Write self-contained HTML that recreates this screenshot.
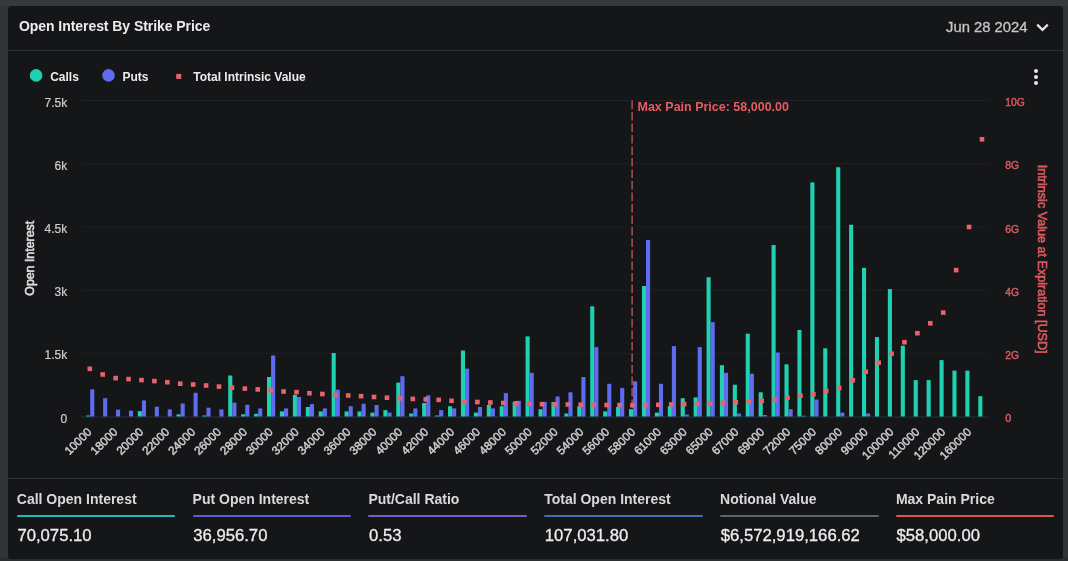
<!DOCTYPE html>
<html><head><meta charset="utf-8"><title>Open Interest By Strike Price</title>
<style>
html,body{margin:0;padding:0}
body{width:1068px;height:561px;overflow:hidden;background:#323335;font-family:"Liberation Sans",sans-serif;position:relative}
.top{position:absolute;left:0;top:0;width:1068px;height:6px;background:#38393b}
.bot{position:absolute;left:0;top:557px;width:1068px;height:4px;background:#2c2d2f}
.card{position:absolute;left:8.2px;top:5.6px;width:1054.7px;height:553px;background:#151618;border-radius:3.5px}
.hd{position:absolute;left:8px;top:49.5px;width:1054.5px;height:1px;background:#2f3034}
.fd{position:absolute;left:8px;top:478.1px;width:1054.5px;height:1px;background:#2f3034}
.title{position:absolute;left:19px;top:16.6px;font-size:14px;letter-spacing:-0.06px;font-weight:bold;color:#ececee;white-space:nowrap;line-height:18px}
.date{position:absolute;left:946px;top:18.2px;font-size:14.8px;-webkit-text-stroke:0.3px #c6c6c8;color:#c6c6c8;white-space:nowrap;line-height:18px}
svg{position:absolute;left:0;top:0}
#w{position:absolute;left:0;top:0;width:1068px;height:561px;filter:blur(0.35px)}
svg text{font-family:"Liberation Sans",sans-serif}
.fl{position:absolute;top:489.7px;font-size:14px;font-weight:bold;color:#d9d9db;white-space:nowrap;line-height:18px}
.fu{position:absolute;top:514.7px;width:158.6px;height:2.6px;border-radius:1px}
.fv{position:absolute;top:525.3px;font-size:16.7px;-webkit-text-stroke:0.3px #ececee;color:#ececee;white-space:nowrap;line-height:22px}
</style></head><body>
<div class="top"></div><div class="bot"></div>
<div class="card"></div>
<div id="w">
<div class="hd"></div>
<div class="fd"></div>
<div class="title" id="title">Open Interest By Strike Price</div>
<div class="date" id="date">Jun 28 2024</div>
<svg width="1068" height="561" viewBox="0 0 1068 561">
<line x1="81" x2="988.5" y1="100.5" y2="100.5" stroke="#1f2024" stroke-width="1"/>
<line x1="81" x2="988.5" y1="163.7" y2="163.7" stroke="#1f2024" stroke-width="1"/>
<line x1="81" x2="988.5" y1="226.9" y2="226.9" stroke="#1f2024" stroke-width="1"/>
<line x1="81" x2="988.5" y1="290.1" y2="290.1" stroke="#1f2024" stroke-width="1"/>
<line x1="81" x2="988.5" y1="353.3" y2="353.3" stroke="#1f2024" stroke-width="1"/>
<line x1="81" x2="988.5" y1="417.0" y2="417.0" stroke="#2e2f34" stroke-width="1"/>
<line x1="632.1" x2="632.1" y1="100.5" y2="416.5" stroke="#c5575a" stroke-width="1.3" stroke-dasharray="8.4,3.1"/>
<rect x="86.10" y="415.5" width="4.1" height="1.0" fill="#1fd0b1"/>
<rect x="90.20" y="389.4" width="4.1" height="27.1" fill="#5f6cf2"/>
<rect x="103.12" y="398.2" width="4.1" height="18.3" fill="#5f6cf2"/>
<rect x="116.04" y="409.7" width="4.1" height="6.8" fill="#5f6cf2"/>
<rect x="128.96" y="410.7" width="4.1" height="5.8" fill="#5f6cf2"/>
<rect x="137.78" y="411.1" width="4.1" height="5.4" fill="#1fd0b1"/>
<rect x="141.88" y="400.4" width="4.1" height="16.1" fill="#5f6cf2"/>
<rect x="154.80" y="406.7" width="4.1" height="9.8" fill="#5f6cf2"/>
<rect x="167.72" y="409.4" width="4.1" height="7.1" fill="#5f6cf2"/>
<rect x="176.54" y="414.3" width="4.1" height="2.2" fill="#1fd0b1"/>
<rect x="180.64" y="403.5" width="4.1" height="13.0" fill="#5f6cf2"/>
<rect x="193.56" y="392.8" width="4.1" height="23.7" fill="#5f6cf2"/>
<rect x="202.38" y="415.5" width="4.1" height="1.0" fill="#1fd0b1"/>
<rect x="206.48" y="407.7" width="4.1" height="8.8" fill="#5f6cf2"/>
<rect x="219.40" y="409.4" width="4.1" height="7.1" fill="#5f6cf2"/>
<rect x="228.22" y="375.5" width="4.1" height="41.0" fill="#1fd0b1"/>
<rect x="232.32" y="402.6" width="4.1" height="13.9" fill="#5f6cf2"/>
<rect x="241.14" y="414.3" width="4.1" height="2.2" fill="#1fd0b1"/>
<rect x="245.24" y="404.8" width="4.1" height="11.7" fill="#5f6cf2"/>
<rect x="254.07" y="413.8" width="4.1" height="2.7" fill="#1fd0b1"/>
<rect x="258.17" y="408.4" width="4.1" height="8.1" fill="#5f6cf2"/>
<rect x="267.00" y="377.0" width="4.1" height="39.5" fill="#1fd0b1"/>
<rect x="271.10" y="355.5" width="4.1" height="61.0" fill="#5f6cf2"/>
<rect x="279.92" y="411.4" width="4.1" height="5.1" fill="#1fd0b1"/>
<rect x="284.02" y="408.4" width="4.1" height="8.1" fill="#5f6cf2"/>
<rect x="292.85" y="394.8" width="4.1" height="21.7" fill="#1fd0b1"/>
<rect x="296.95" y="396.9" width="4.1" height="19.6" fill="#5f6cf2"/>
<rect x="305.78" y="407.0" width="4.1" height="9.5" fill="#1fd0b1"/>
<rect x="309.88" y="404.1" width="4.1" height="12.4" fill="#5f6cf2"/>
<rect x="318.71" y="411.4" width="4.1" height="5.1" fill="#1fd0b1"/>
<rect x="322.81" y="408.4" width="4.1" height="8.1" fill="#5f6cf2"/>
<rect x="331.64" y="353.0" width="4.1" height="63.5" fill="#1fd0b1"/>
<rect x="335.74" y="389.7" width="4.1" height="26.8" fill="#5f6cf2"/>
<rect x="344.56" y="411.4" width="4.1" height="5.1" fill="#1fd0b1"/>
<rect x="348.66" y="406.2" width="4.1" height="10.3" fill="#5f6cf2"/>
<rect x="357.49" y="411.4" width="4.1" height="5.1" fill="#1fd0b1"/>
<rect x="361.59" y="403.8" width="4.1" height="12.7" fill="#5f6cf2"/>
<rect x="370.42" y="412.6" width="4.1" height="3.9" fill="#1fd0b1"/>
<rect x="374.52" y="405.0" width="4.1" height="11.5" fill="#5f6cf2"/>
<rect x="383.35" y="410.1" width="4.1" height="6.4" fill="#1fd0b1"/>
<rect x="387.45" y="412.6" width="4.1" height="3.9" fill="#5f6cf2"/>
<rect x="396.28" y="382.6" width="4.1" height="33.9" fill="#1fd0b1"/>
<rect x="400.38" y="376.2" width="4.1" height="40.3" fill="#5f6cf2"/>
<rect x="409.21" y="413.5" width="4.1" height="3.0" fill="#1fd0b1"/>
<rect x="413.31" y="408.4" width="4.1" height="8.1" fill="#5f6cf2"/>
<rect x="422.13" y="403.0" width="4.1" height="13.5" fill="#1fd0b1"/>
<rect x="426.23" y="395.3" width="4.1" height="21.2" fill="#5f6cf2"/>
<rect x="435.06" y="415.5" width="4.1" height="1.0" fill="#1fd0b1"/>
<rect x="439.16" y="410.1" width="4.1" height="6.4" fill="#5f6cf2"/>
<rect x="447.99" y="406.2" width="4.1" height="10.3" fill="#1fd0b1"/>
<rect x="452.09" y="408.4" width="4.1" height="8.1" fill="#5f6cf2"/>
<rect x="460.92" y="350.5" width="4.1" height="66.0" fill="#1fd0b1"/>
<rect x="465.02" y="368.6" width="4.1" height="47.9" fill="#5f6cf2"/>
<rect x="473.85" y="412.6" width="4.1" height="3.9" fill="#1fd0b1"/>
<rect x="477.95" y="407.0" width="4.1" height="9.5" fill="#5f6cf2"/>
<rect x="486.77" y="405.0" width="4.1" height="11.5" fill="#1fd0b1"/>
<rect x="490.87" y="408.4" width="4.1" height="8.1" fill="#5f6cf2"/>
<rect x="499.70" y="406.2" width="4.1" height="10.3" fill="#1fd0b1"/>
<rect x="503.80" y="393.1" width="4.1" height="23.4" fill="#5f6cf2"/>
<rect x="512.63" y="401.9" width="4.1" height="14.6" fill="#1fd0b1"/>
<rect x="516.73" y="400.8" width="4.1" height="15.7" fill="#5f6cf2"/>
<rect x="525.56" y="336.4" width="4.1" height="80.1" fill="#1fd0b1"/>
<rect x="529.66" y="372.8" width="4.1" height="43.7" fill="#5f6cf2"/>
<rect x="538.49" y="409.2" width="4.1" height="7.3" fill="#1fd0b1"/>
<rect x="542.59" y="401.9" width="4.1" height="14.6" fill="#5f6cf2"/>
<rect x="551.41" y="401.9" width="4.1" height="14.6" fill="#1fd0b1"/>
<rect x="555.51" y="396.5" width="4.1" height="20.0" fill="#5f6cf2"/>
<rect x="564.34" y="413.5" width="4.1" height="3.0" fill="#1fd0b1"/>
<rect x="568.44" y="392.3" width="4.1" height="24.2" fill="#5f6cf2"/>
<rect x="577.27" y="406.2" width="4.1" height="10.3" fill="#1fd0b1"/>
<rect x="581.37" y="377.0" width="4.1" height="39.5" fill="#5f6cf2"/>
<rect x="590.20" y="306.3" width="4.1" height="110.2" fill="#1fd0b1"/>
<rect x="594.30" y="347.1" width="4.1" height="69.4" fill="#5f6cf2"/>
<rect x="603.13" y="411.4" width="4.1" height="5.1" fill="#1fd0b1"/>
<rect x="607.23" y="383.8" width="4.1" height="32.7" fill="#5f6cf2"/>
<rect x="616.06" y="407.0" width="4.1" height="9.5" fill="#1fd0b1"/>
<rect x="620.16" y="388.1" width="4.1" height="28.4" fill="#5f6cf2"/>
<rect x="628.98" y="409.2" width="4.1" height="7.3" fill="#1fd0b1"/>
<rect x="633.08" y="381.3" width="4.1" height="35.2" fill="#5f6cf2"/>
<rect x="641.91" y="286.0" width="4.1" height="130.5" fill="#1fd0b1"/>
<rect x="646.01" y="240.0" width="4.1" height="176.5" fill="#5f6cf2"/>
<rect x="654.84" y="412.6" width="4.1" height="3.9" fill="#1fd0b1"/>
<rect x="658.94" y="383.8" width="4.1" height="32.7" fill="#5f6cf2"/>
<rect x="667.77" y="406.2" width="4.1" height="10.3" fill="#1fd0b1"/>
<rect x="671.87" y="346.1" width="4.1" height="70.4" fill="#5f6cf2"/>
<rect x="680.70" y="398.2" width="4.1" height="18.3" fill="#1fd0b1"/>
<rect x="684.80" y="414.5" width="4.1" height="2.0" fill="#5f6cf2"/>
<rect x="693.62" y="397.4" width="4.1" height="19.1" fill="#1fd0b1"/>
<rect x="697.72" y="347.1" width="4.1" height="69.4" fill="#5f6cf2"/>
<rect x="706.55" y="277.2" width="4.1" height="139.3" fill="#1fd0b1"/>
<rect x="710.65" y="322.2" width="4.1" height="94.3" fill="#5f6cf2"/>
<rect x="719.88" y="365.2" width="4.1" height="51.3" fill="#1fd0b1"/>
<rect x="723.98" y="372.8" width="4.1" height="43.7" fill="#5f6cf2"/>
<rect x="732.80" y="384.7" width="4.1" height="31.8" fill="#1fd0b1"/>
<rect x="736.90" y="413.5" width="4.1" height="3.0" fill="#5f6cf2"/>
<rect x="745.72" y="333.7" width="4.1" height="82.8" fill="#1fd0b1"/>
<rect x="749.82" y="373.7" width="4.1" height="42.8" fill="#5f6cf2"/>
<rect x="758.64" y="392.3" width="4.1" height="24.2" fill="#1fd0b1"/>
<rect x="762.74" y="415.0" width="4.1" height="1.5" fill="#5f6cf2"/>
<rect x="771.56" y="245.0" width="4.1" height="171.5" fill="#1fd0b1"/>
<rect x="775.66" y="352.5" width="4.1" height="64.0" fill="#5f6cf2"/>
<rect x="784.48" y="364.3" width="4.1" height="52.2" fill="#1fd0b1"/>
<rect x="788.58" y="409.2" width="4.1" height="7.3" fill="#5f6cf2"/>
<rect x="797.40" y="330.0" width="4.1" height="86.5" fill="#1fd0b1"/>
<rect x="801.50" y="415.7" width="4.1" height="0.8" fill="#5f6cf2"/>
<rect x="810.32" y="182.4" width="4.1" height="234.1" fill="#1fd0b1"/>
<rect x="814.42" y="399.6" width="4.1" height="16.9" fill="#5f6cf2"/>
<rect x="823.24" y="348.3" width="4.1" height="68.2" fill="#1fd0b1"/>
<rect x="836.16" y="167.2" width="4.1" height="249.3" fill="#1fd0b1"/>
<rect x="840.26" y="412.6" width="4.1" height="3.9" fill="#5f6cf2"/>
<rect x="849.08" y="224.7" width="4.1" height="191.8" fill="#1fd0b1"/>
<rect x="862.00" y="267.8" width="4.1" height="148.7" fill="#1fd0b1"/>
<rect x="866.10" y="413.5" width="4.1" height="3.0" fill="#5f6cf2"/>
<rect x="874.92" y="337.1" width="4.1" height="79.4" fill="#1fd0b1"/>
<rect x="887.84" y="289.1" width="4.1" height="127.4" fill="#1fd0b1"/>
<rect x="900.76" y="345.7" width="4.1" height="70.8" fill="#1fd0b1"/>
<rect x="913.68" y="380.1" width="4.1" height="36.4" fill="#1fd0b1"/>
<rect x="926.60" y="380.1" width="4.1" height="36.4" fill="#1fd0b1"/>
<rect x="939.52" y="360.1" width="4.1" height="56.4" fill="#1fd0b1"/>
<rect x="952.44" y="370.6" width="4.1" height="45.9" fill="#1fd0b1"/>
<rect x="965.36" y="370.6" width="4.1" height="45.9" fill="#1fd0b1"/>
<rect x="978.28" y="396.2" width="4.1" height="20.3" fill="#1fd0b1"/>
<rect x="87.50" y="366.5" width="4.6" height="4.6" fill="#e8636b"/>
<rect x="100.42" y="372.2" width="4.6" height="4.6" fill="#e8636b"/>
<rect x="113.34" y="375.8" width="4.6" height="4.6" fill="#e8636b"/>
<rect x="126.26" y="376.8" width="4.6" height="4.6" fill="#e8636b"/>
<rect x="139.18" y="377.8" width="4.6" height="4.6" fill="#e8636b"/>
<rect x="152.10" y="378.8" width="4.6" height="4.6" fill="#e8636b"/>
<rect x="165.02" y="379.9" width="4.6" height="4.6" fill="#e8636b"/>
<rect x="177.94" y="381.4" width="4.6" height="4.6" fill="#e8636b"/>
<rect x="190.86" y="382.2" width="4.6" height="4.6" fill="#e8636b"/>
<rect x="203.78" y="383.2" width="4.6" height="4.6" fill="#e8636b"/>
<rect x="216.70" y="384.3" width="4.6" height="4.6" fill="#e8636b"/>
<rect x="229.62" y="385.4" width="4.6" height="4.6" fill="#e8636b"/>
<rect x="242.54" y="386.3" width="4.6" height="4.6" fill="#e8636b"/>
<rect x="255.46" y="387.1" width="4.6" height="4.6" fill="#e8636b"/>
<rect x="268.38" y="388.1" width="4.6" height="4.6" fill="#e8636b"/>
<rect x="281.30" y="389.2" width="4.6" height="4.6" fill="#e8636b"/>
<rect x="294.22" y="389.8" width="4.6" height="4.6" fill="#e8636b"/>
<rect x="307.14" y="390.9" width="4.6" height="4.6" fill="#e8636b"/>
<rect x="320.06" y="391.7" width="4.6" height="4.6" fill="#e8636b"/>
<rect x="332.98" y="392.6" width="4.6" height="4.6" fill="#e8636b"/>
<rect x="345.90" y="393.2" width="4.6" height="4.6" fill="#e8636b"/>
<rect x="358.82" y="393.9" width="4.6" height="4.6" fill="#e8636b"/>
<rect x="371.74" y="394.7" width="4.6" height="4.6" fill="#e8636b"/>
<rect x="384.66" y="395.4" width="4.6" height="4.6" fill="#e8636b"/>
<rect x="397.58" y="396.1" width="4.6" height="4.6" fill="#e8636b"/>
<rect x="410.50" y="396.6" width="4.6" height="4.6" fill="#e8636b"/>
<rect x="423.42" y="397.1" width="4.6" height="4.6" fill="#e8636b"/>
<rect x="436.34" y="397.6" width="4.6" height="4.6" fill="#e8636b"/>
<rect x="449.26" y="398.5" width="4.6" height="4.6" fill="#e8636b"/>
<rect x="462.18" y="399.2" width="4.6" height="4.6" fill="#e8636b"/>
<rect x="475.10" y="399.7" width="4.6" height="4.6" fill="#e8636b"/>
<rect x="488.02" y="400.2" width="4.6" height="4.6" fill="#e8636b"/>
<rect x="500.94" y="400.7" width="4.6" height="4.6" fill="#e8636b"/>
<rect x="513.86" y="401.0" width="4.6" height="4.6" fill="#e8636b"/>
<rect x="526.78" y="401.5" width="4.6" height="4.6" fill="#e8636b"/>
<rect x="539.70" y="401.9" width="4.6" height="4.6" fill="#e8636b"/>
<rect x="552.62" y="402.0" width="4.6" height="4.6" fill="#e8636b"/>
<rect x="565.54" y="402.2" width="4.6" height="4.6" fill="#e8636b"/>
<rect x="578.46" y="402.4" width="4.6" height="4.6" fill="#e8636b"/>
<rect x="591.38" y="402.5" width="4.6" height="4.6" fill="#e8636b"/>
<rect x="604.30" y="402.7" width="4.6" height="4.6" fill="#e8636b"/>
<rect x="617.22" y="402.7" width="4.6" height="4.6" fill="#e8636b"/>
<rect x="630.14" y="402.9" width="4.6" height="4.6" fill="#e8636b"/>
<rect x="643.06" y="402.7" width="4.6" height="4.6" fill="#e8636b"/>
<rect x="655.98" y="402.5" width="4.6" height="4.6" fill="#e8636b"/>
<rect x="668.90" y="402.2" width="4.6" height="4.6" fill="#e8636b"/>
<rect x="681.82" y="401.9" width="4.6" height="4.6" fill="#e8636b"/>
<rect x="694.74" y="401.5" width="4.6" height="4.6" fill="#e8636b"/>
<rect x="707.66" y="401.2" width="4.6" height="4.6" fill="#e8636b"/>
<rect x="720.58" y="400.5" width="4.6" height="4.6" fill="#e8636b"/>
<rect x="733.50" y="400.0" width="4.6" height="4.6" fill="#e8636b"/>
<rect x="746.42" y="399.3" width="4.6" height="4.6" fill="#e8636b"/>
<rect x="759.34" y="398.5" width="4.6" height="4.6" fill="#e8636b"/>
<rect x="772.26" y="397.3" width="4.6" height="4.6" fill="#e8636b"/>
<rect x="785.18" y="395.4" width="4.6" height="4.6" fill="#e8636b"/>
<rect x="798.10" y="393.4" width="4.6" height="4.6" fill="#e8636b"/>
<rect x="811.02" y="392.0" width="4.6" height="4.6" fill="#e8636b"/>
<rect x="823.94" y="388.7" width="4.6" height="4.6" fill="#e8636b"/>
<rect x="836.86" y="385.8" width="4.6" height="4.6" fill="#e8636b"/>
<rect x="850.48" y="378.0" width="4.6" height="4.6" fill="#e8636b"/>
<rect x="863.40" y="369.4" width="4.6" height="4.6" fill="#e8636b"/>
<rect x="876.32" y="360.4" width="4.6" height="4.6" fill="#e8636b"/>
<rect x="889.24" y="351.4" width="4.6" height="4.6" fill="#e8636b"/>
<rect x="902.16" y="339.9" width="4.6" height="4.6" fill="#e8636b"/>
<rect x="915.08" y="330.9" width="4.6" height="4.6" fill="#e8636b"/>
<rect x="928.00" y="321.0" width="4.6" height="4.6" fill="#e8636b"/>
<rect x="940.92" y="310.3" width="4.6" height="4.6" fill="#e8636b"/>
<rect x="953.84" y="267.8" width="4.6" height="4.6" fill="#e8636b"/>
<rect x="966.76" y="224.7" width="4.6" height="4.6" fill="#e8636b"/>
<rect x="979.68" y="137.0" width="4.6" height="4.6" fill="#e8636b"/>
<text x="67.3" y="106.6" text-anchor="end" font-size="12" fill="#cdcdcf" stroke="#cdcdcf" stroke-width="0.2">7.5k</text>
<text x="67.3" y="169.8" text-anchor="end" font-size="12" fill="#cdcdcf" stroke="#cdcdcf" stroke-width="0.2">6k</text>
<text x="67.3" y="233.0" text-anchor="end" font-size="12" fill="#cdcdcf" stroke="#cdcdcf" stroke-width="0.2">4.5k</text>
<text x="67.3" y="296.2" text-anchor="end" font-size="12" fill="#cdcdcf" stroke="#cdcdcf" stroke-width="0.2">3k</text>
<text x="67.3" y="359.4" text-anchor="end" font-size="12" fill="#cdcdcf" stroke="#cdcdcf" stroke-width="0.2">1.5k</text>
<text x="67.3" y="422.6" text-anchor="end" font-size="12" fill="#cdcdcf" stroke="#cdcdcf" stroke-width="0.2">0</text>
<text x="1005.2" y="106.1" text-anchor="start" font-size="11.6" textLength="19.6" lengthAdjust="spacingAndGlyphs" fill="#dc5a5f" stroke="#dc5a5f" stroke-width="0.45">10G</text>
<text x="1005.2" y="169.3" text-anchor="start" font-size="11.6" textLength="13.9" lengthAdjust="spacingAndGlyphs" fill="#dc5a5f" stroke="#dc5a5f" stroke-width="0.45">8G</text>
<text x="1005.2" y="232.5" text-anchor="start" font-size="11.6" textLength="13.9" lengthAdjust="spacingAndGlyphs" fill="#dc5a5f" stroke="#dc5a5f" stroke-width="0.45">6G</text>
<text x="1005.2" y="295.7" text-anchor="start" font-size="11.6" textLength="13.9" lengthAdjust="spacingAndGlyphs" fill="#dc5a5f" stroke="#dc5a5f" stroke-width="0.45">4G</text>
<text x="1005.2" y="358.9" text-anchor="start" font-size="11.6" textLength="13.9" lengthAdjust="spacingAndGlyphs" fill="#dc5a5f" stroke="#dc5a5f" stroke-width="0.45">2G</text>
<text x="1005.2" y="422.1" text-anchor="start" font-size="11.6" textLength="6.0" lengthAdjust="spacingAndGlyphs" fill="#dc5a5f" stroke="#dc5a5f" stroke-width="0.45">0</text>
<text transform="translate(92.4,432.6) rotate(-45)" text-anchor="end" font-size="11.7" fill="#cdcdcf" stroke="#cdcdcf" stroke-width="0.5">10000</text>
<text transform="translate(118.3,432.6) rotate(-45)" text-anchor="end" font-size="11.7" fill="#cdcdcf" stroke="#cdcdcf" stroke-width="0.5">18000</text>
<text transform="translate(144.2,432.6) rotate(-45)" text-anchor="end" font-size="11.7" fill="#cdcdcf" stroke="#cdcdcf" stroke-width="0.5">20000</text>
<text transform="translate(170.1,432.6) rotate(-45)" text-anchor="end" font-size="11.7" fill="#cdcdcf" stroke="#cdcdcf" stroke-width="0.5">22000</text>
<text transform="translate(196.0,432.6) rotate(-45)" text-anchor="end" font-size="11.7" fill="#cdcdcf" stroke="#cdcdcf" stroke-width="0.5">24000</text>
<text transform="translate(221.9,432.6) rotate(-45)" text-anchor="end" font-size="11.7" fill="#cdcdcf" stroke="#cdcdcf" stroke-width="0.5">26000</text>
<text transform="translate(247.8,432.6) rotate(-45)" text-anchor="end" font-size="11.7" fill="#cdcdcf" stroke="#cdcdcf" stroke-width="0.5">28000</text>
<text transform="translate(273.7,432.6) rotate(-45)" text-anchor="end" font-size="11.7" fill="#cdcdcf" stroke="#cdcdcf" stroke-width="0.5">30000</text>
<text transform="translate(299.6,432.6) rotate(-45)" text-anchor="end" font-size="11.7" fill="#cdcdcf" stroke="#cdcdcf" stroke-width="0.5">32000</text>
<text transform="translate(325.5,432.6) rotate(-45)" text-anchor="end" font-size="11.7" fill="#cdcdcf" stroke="#cdcdcf" stroke-width="0.5">34000</text>
<text transform="translate(351.4,432.6) rotate(-45)" text-anchor="end" font-size="11.7" fill="#cdcdcf" stroke="#cdcdcf" stroke-width="0.5">36000</text>
<text transform="translate(377.3,432.6) rotate(-45)" text-anchor="end" font-size="11.7" fill="#cdcdcf" stroke="#cdcdcf" stroke-width="0.5">38000</text>
<text transform="translate(403.2,432.6) rotate(-45)" text-anchor="end" font-size="11.7" fill="#cdcdcf" stroke="#cdcdcf" stroke-width="0.5">40000</text>
<text transform="translate(429.1,432.6) rotate(-45)" text-anchor="end" font-size="11.7" fill="#cdcdcf" stroke="#cdcdcf" stroke-width="0.5">42000</text>
<text transform="translate(455.0,432.6) rotate(-45)" text-anchor="end" font-size="11.7" fill="#cdcdcf" stroke="#cdcdcf" stroke-width="0.5">44000</text>
<text transform="translate(480.9,432.6) rotate(-45)" text-anchor="end" font-size="11.7" fill="#cdcdcf" stroke="#cdcdcf" stroke-width="0.5">46000</text>
<text transform="translate(506.8,432.6) rotate(-45)" text-anchor="end" font-size="11.7" fill="#cdcdcf" stroke="#cdcdcf" stroke-width="0.5">48000</text>
<text transform="translate(532.7,432.6) rotate(-45)" text-anchor="end" font-size="11.7" fill="#cdcdcf" stroke="#cdcdcf" stroke-width="0.5">50000</text>
<text transform="translate(558.5,432.6) rotate(-45)" text-anchor="end" font-size="11.7" fill="#cdcdcf" stroke="#cdcdcf" stroke-width="0.5">52000</text>
<text transform="translate(584.4,432.6) rotate(-45)" text-anchor="end" font-size="11.7" fill="#cdcdcf" stroke="#cdcdcf" stroke-width="0.5">54000</text>
<text transform="translate(610.2,432.6) rotate(-45)" text-anchor="end" font-size="11.7" fill="#cdcdcf" stroke="#cdcdcf" stroke-width="0.5">56000</text>
<text transform="translate(636.0,432.6) rotate(-45)" text-anchor="end" font-size="11.7" fill="#cdcdcf" stroke="#cdcdcf" stroke-width="0.5">58000</text>
<text transform="translate(661.9,432.6) rotate(-45)" text-anchor="end" font-size="11.7" fill="#cdcdcf" stroke="#cdcdcf" stroke-width="0.5">61000</text>
<text transform="translate(687.7,432.6) rotate(-45)" text-anchor="end" font-size="11.7" fill="#cdcdcf" stroke="#cdcdcf" stroke-width="0.5">63000</text>
<text transform="translate(713.6,432.6) rotate(-45)" text-anchor="end" font-size="11.7" fill="#cdcdcf" stroke="#cdcdcf" stroke-width="0.5">65000</text>
<text transform="translate(739.4,432.6) rotate(-45)" text-anchor="end" font-size="11.7" fill="#cdcdcf" stroke="#cdcdcf" stroke-width="0.5">67000</text>
<text transform="translate(765.2,432.6) rotate(-45)" text-anchor="end" font-size="11.7" fill="#cdcdcf" stroke="#cdcdcf" stroke-width="0.5">69000</text>
<text transform="translate(791.1,432.6) rotate(-45)" text-anchor="end" font-size="11.7" fill="#cdcdcf" stroke="#cdcdcf" stroke-width="0.5">72000</text>
<text transform="translate(816.9,432.6) rotate(-45)" text-anchor="end" font-size="11.7" fill="#cdcdcf" stroke="#cdcdcf" stroke-width="0.5">75000</text>
<text transform="translate(842.8,432.6) rotate(-45)" text-anchor="end" font-size="11.7" fill="#cdcdcf" stroke="#cdcdcf" stroke-width="0.5">80000</text>
<text transform="translate(868.6,432.6) rotate(-45)" text-anchor="end" font-size="11.7" fill="#cdcdcf" stroke="#cdcdcf" stroke-width="0.5">90000</text>
<text transform="translate(894.4,432.6) rotate(-45)" text-anchor="end" font-size="11.7" fill="#cdcdcf" stroke="#cdcdcf" stroke-width="0.5">100000</text>
<text transform="translate(920.3,432.6) rotate(-45)" text-anchor="end" font-size="11.7" fill="#cdcdcf" stroke="#cdcdcf" stroke-width="0.5">110000</text>
<text transform="translate(946.1,432.6) rotate(-45)" text-anchor="end" font-size="11.7" fill="#cdcdcf" stroke="#cdcdcf" stroke-width="0.5">120000</text>
<text transform="translate(972.0,432.6) rotate(-45)" text-anchor="end" font-size="11.7" fill="#cdcdcf" stroke="#cdcdcf" stroke-width="0.5">160000</text>
<text transform="translate(34.2,258.3) rotate(-90)" text-anchor="middle" font-size="12.36" fill="#dcdcde" stroke="#dcdcde" stroke-width="0.6" id="yt">Open Interest</text>
<text transform="translate(1038.0,259.2) rotate(90)" text-anchor="middle" font-size="12.6" fill="#dc5a5f" stroke="#dc5a5f" stroke-width="0.6" id="yt2">Intrinsic Value at Expiration [USD]</text>
<text x="637.5" y="111.1" font-size="12.5" font-weight="bold" fill="#e35d62" id="mp">Max Pain Price: 58,000.00</text>
<circle cx="36.1" cy="75.4" r="6.3" fill="#1fd0b1"/>
<circle cx="108.5" cy="75.4" r="6.3" fill="#5f6cf2"/>
<rect x="176.2" y="73.9" width="5" height="5" fill="#e8636b"/>
<text x="50.2" y="80.6" font-size="12" font-weight="bold" fill="#ececee" id="l1">Calls</text>
<text x="122.4" y="80.6" font-size="12" font-weight="bold" fill="#ececee" id="l2">Puts</text>
<text x="193.2" y="80.6" font-size="12" font-weight="bold" fill="#ececee" id="l3">Total Intrinsic Value</text>
<circle cx="1036" cy="71" r="2" fill="#e6e6e8"/>
<circle cx="1036" cy="77" r="2" fill="#e6e6e8"/>
<circle cx="1036" cy="83" r="2" fill="#e6e6e8"/>
<path d="M1037.2 24.6 L1042.5 29.9 L1047.8 24.6" fill="none" stroke="#e6e6e8" stroke-width="2.2"/>
</svg>
<div class="fl" style="left:16.8px">Call Open Interest</div><div class="fu" style="left:16.8px;background:#1fbdb6"></div><div class="fv" style="left:17.4px">70,075.10</div>
<div class="fl" style="left:192.6px">Put Open Interest</div><div class="fu" style="left:192.6px;background:#5a5fd6"></div><div class="fv" style="left:193.2px">36,956.70</div>
<div class="fl" style="left:368.4px">Put/Call Ratio</div><div class="fu" style="left:368.4px;background:#7a5cc8"></div><div class="fv" style="left:369.0px">0.53</div>
<div class="fl" style="left:544.2px">Total Open Interest</div><div class="fu" style="left:544.2px;background:#3f6fb5"></div><div class="fv" style="left:544.8px">107,031.80</div>
<div class="fl" style="left:720.1px">Notional Value</div><div class="fu" style="left:720.1px;background:#566573"></div><div class="fv" style="left:720.7px">$6,572,919,166.62</div>
<div class="fl" style="left:895.9px">Max Pain Price</div><div class="fu" style="left:895.9px;background:#d9534f"></div><div class="fv" style="left:896.5px">$58,000.00</div>
</div>
</body></html>
